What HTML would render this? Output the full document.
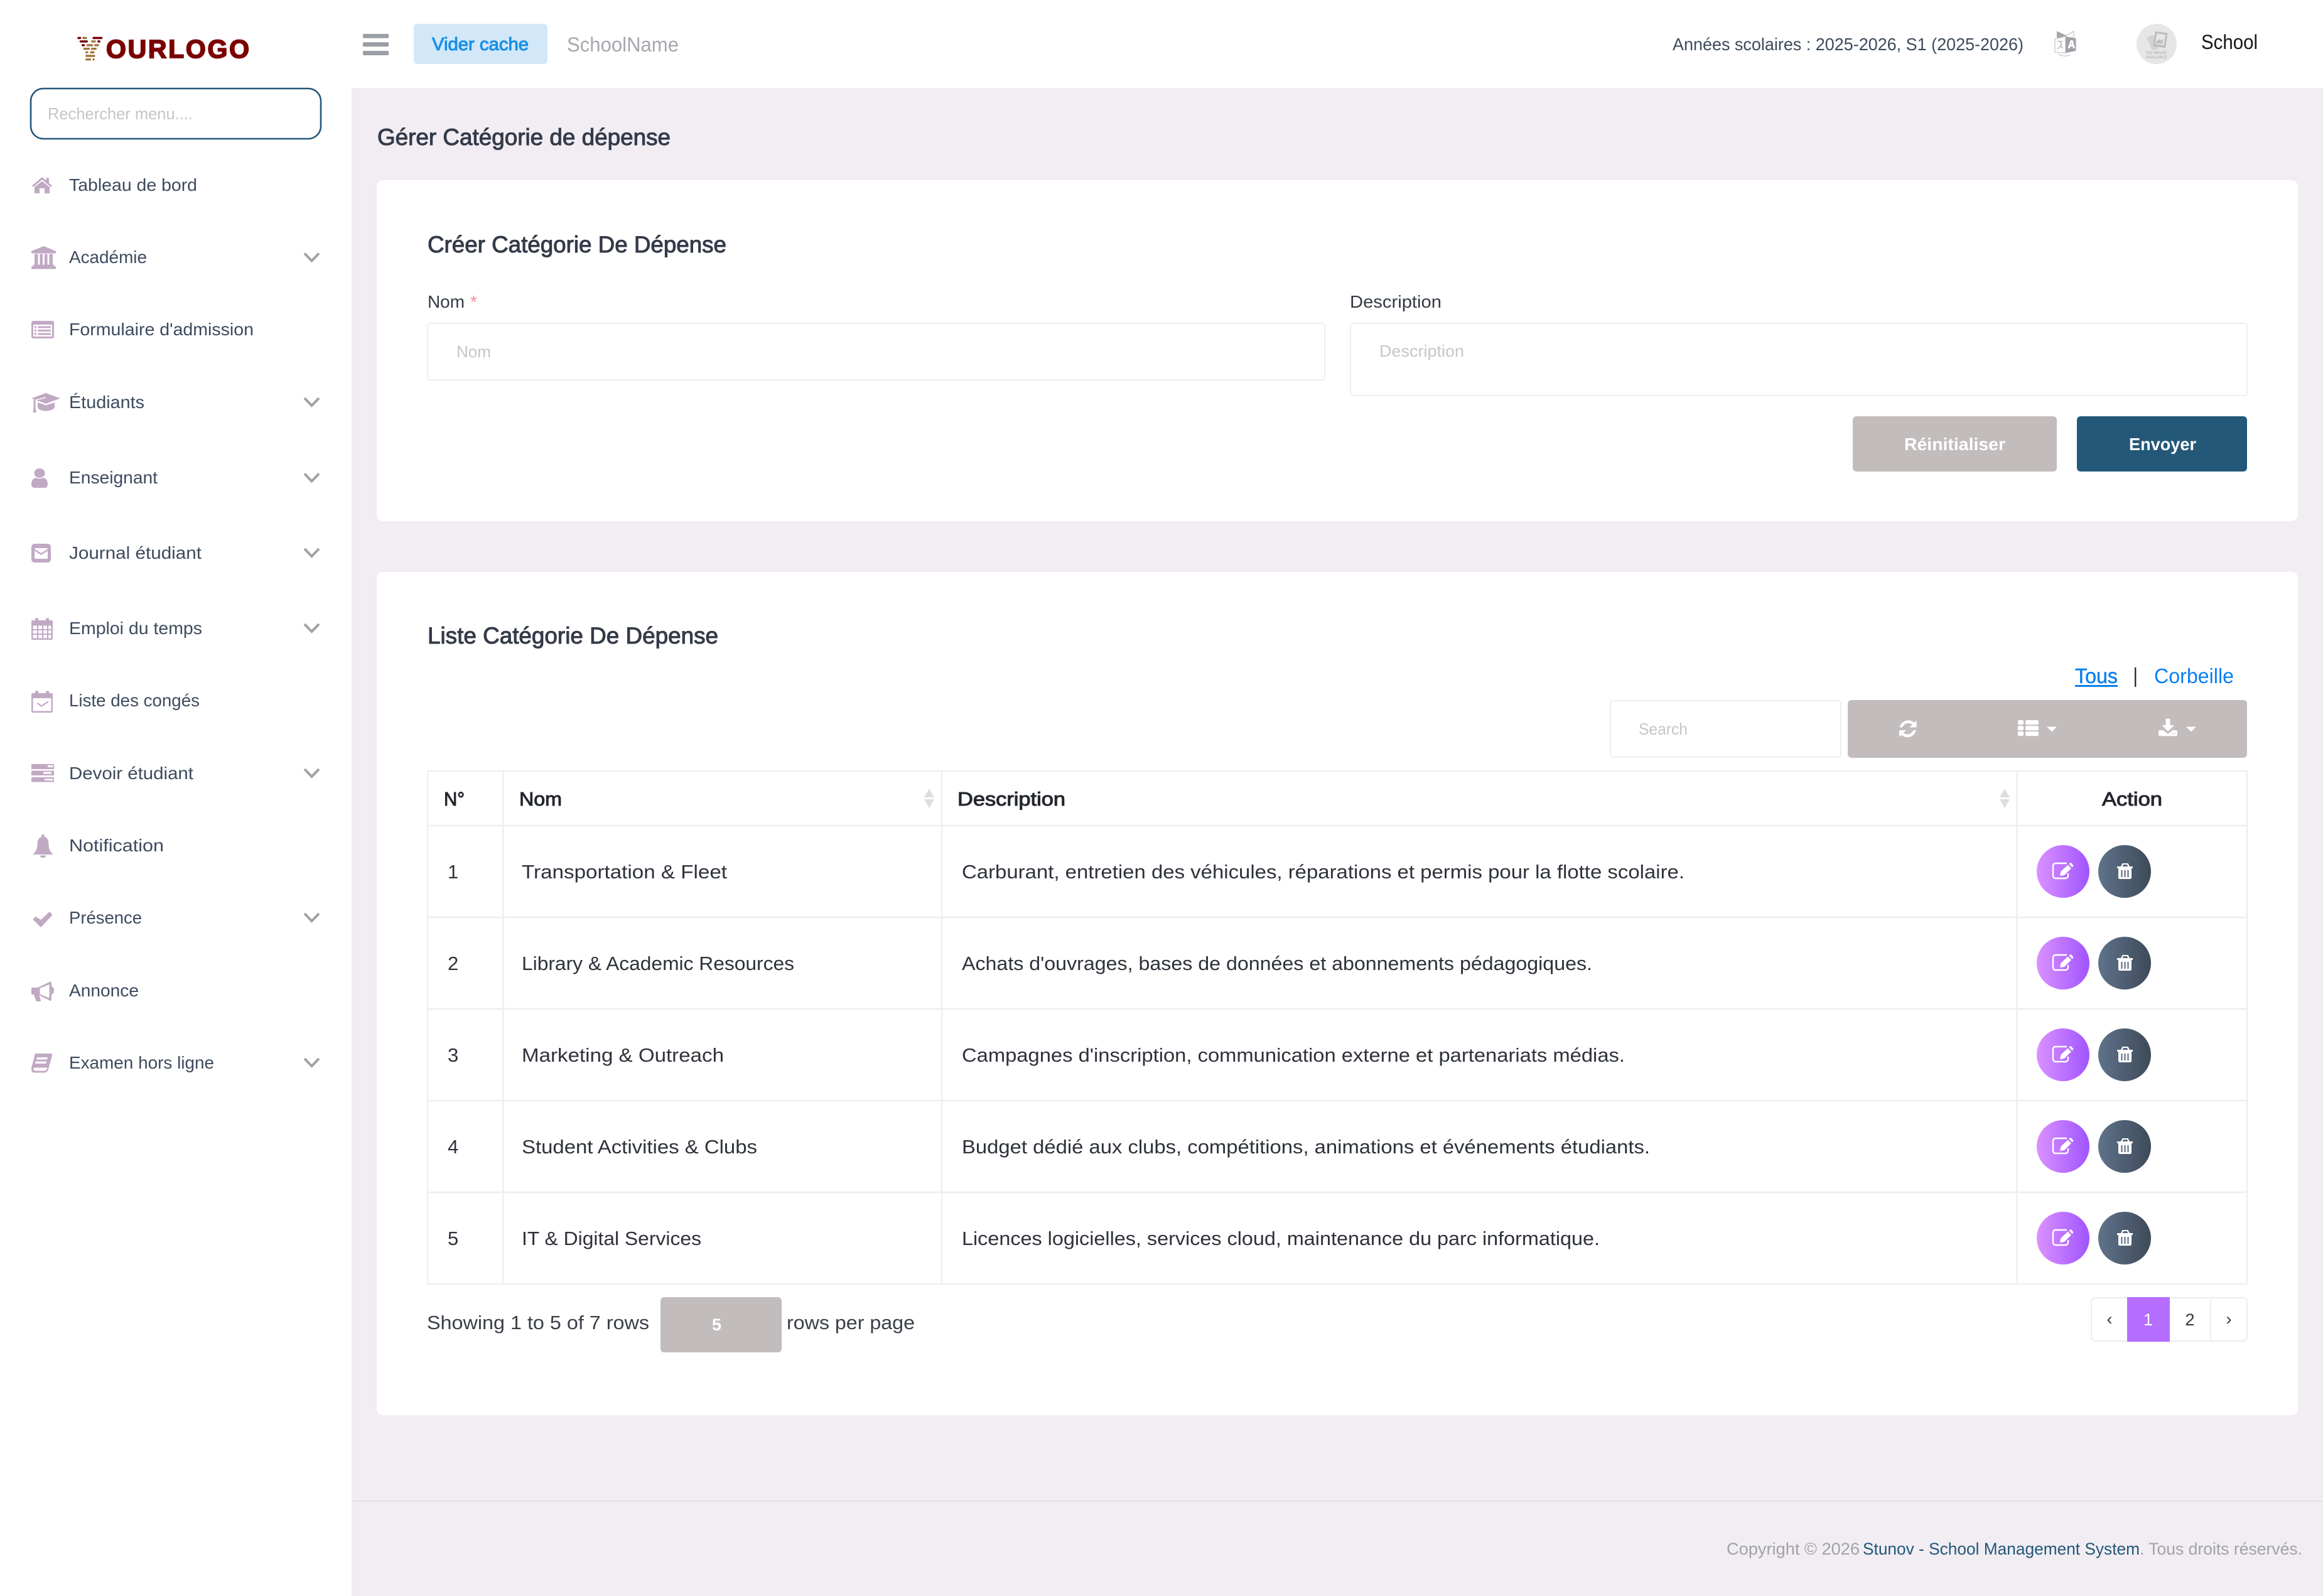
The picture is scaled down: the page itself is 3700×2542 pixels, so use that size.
<!DOCTYPE html>
<html lang="fr">
<head>
<meta charset="utf-8">
<title>Gérer Catégorie de dépense</title>
<style>
html,body{margin:0;padding:0;background:#f1edf3;width:3700px;height:2542px;overflow:hidden}
svg{display:block}
text{font-family:"Liberation Sans",Arial,sans-serif;white-space:pre}
.s{font-size:28px;fill:#3e4b5e}
.t{font-size:37px;fill:#343a48;stroke:#343a48;stroke-width:1px}
.l{font-size:28px;fill:#343a44}
.ph{font-size:26px;fill:#c6c6c9}
.b{font-size:28px;fill:#fff;font-weight:bold}
.h{font-size:31px;fill:#23262d;stroke:#23262d;stroke-width:1px}
.r{font-size:31px;fill:#2e323a}
.sh{font-size:31px;fill:#3a3f49}
.a{font-size:33px;fill:#0a80f0}
.p{font-size:27px;fill:#343740}
.f{font-size:27px}
.ic{fill:#c1a9c4}
.chev{fill:none;stroke:#a2a2a6;stroke-width:4;stroke-linejoin:miter}
.br{fill:#fff;stroke:#eeeef3;stroke-width:2}
.grid{stroke:#eeeef3;stroke-width:2.4;fill:none}
</style>
</head>
<body>
<svg xmlns="http://www.w3.org/2000/svg" width="3700" height="2542" viewBox="0 0 3700 2542">
<defs>
<linearGradient id="ge" x1="0" x2="1" y1="0" y2="0"><stop offset="0" stop-color="#da92ff"/><stop offset="1" stop-color="#a054ff"/></linearGradient>
<linearGradient id="gt" x1="0" x2="1" y1="0" y2="0"><stop offset="0" stop-color="#5f738b"/><stop offset="1" stop-color="#3e4a59"/></linearGradient>
<g id="edit">
<circle cx="0" cy="0" r="42" fill="url(#ge)"/>
<path d="M6 -13H-12a4 4 0 0 0-4 4V7a4 4 0 0 0 4 4H4a4 4 0 0 0 4-4V3" fill="none" stroke="#fff" stroke-width="2.4"/>
<path d="M-5 7L-3.5 0L7.500 -10.500L13 -5L2 6Z" fill="#fff"/>
<path d="M9.500 -12L11 -13.500Q12 -14 13 -13.500L16 -10Q16.500 -9 16 -8L14.500 -6.800Z" fill="#fff"/>
</g>
<g id="trash">
<circle cx="0" cy="0" r="42" fill="url(#gt)"/>
<path d="M-12 -8H-6L-3.500 -13H5.500L8 -8H13V-5H11V9.500Q11 12 8.500 12H-7.500Q-10 12-10 9.500V-5H-12Z" fill="#fff"/>
<path d="M-3.500 -8L-1.800 -11H3.800L5.500 -8Z" fill="#546579"/>
<path d="M-4.500 -2V9M.5 -2V9M5.500 -2V9" stroke="#546579" stroke-width="2"/>
</g>
<g id="sort">
<path d="M0 0L8 14H-8Z" fill="#dedede"/><path d="M-8 17H8L0 31Z" fill="#dedede"/>
</g>
</defs>

<!-- page -->
<rect width="3700" height="2542" fill="#f1edf3"/>
<rect x="0" y="0" width="3700" height="140" fill="#fff"/>
<rect x="0" y="0" width="560" height="2542" fill="#fff"/>

<!-- logo -->
<g fill="#7b0000">
<rect x="123.300" y="58.800" width="6" height="3.400" rx="1.700"/><rect x="147.300" y="58.800" width="16" height="3.400" rx="1.700"/>
<rect x="126.700" y="64.300" width="13.300" height="3.400" rx="1.700"/><rect x="155" y="64.300" width="5" height="3.400" rx="1.700"/>
<rect x="130" y="70.300" width="5.300" height="3.400" rx="1.700"/>
</g>
<g fill="#a5763c">
<rect x="131" y="58.800" width="7.700" height="3.400" rx="1.700"/>
<rect x="145" y="64.300" width="7.700" height="3.400" rx="1.700"/>
<rect x="137.700" y="70.300" width="10.600" height="3.400" rx="1.700"/><rect x="150" y="70.300" width="7.700" height="3.400" rx="1.700"/>
<rect x="132.700" y="76" width="10.600" height="3.400" rx="1.700"/><rect x="145" y="76" width="9" height="3.400" rx="1.700"/>
<rect x="136" y="81.600" width="4.700" height="3.400" rx="1.700"/><rect x="143.300" y="81.600" width="7.400" height="3.400" rx="1.700"/>
<rect x="136" y="87.300" width="15.700" height="3.400" rx="1.700"/>
<rect x="136" y="93" width="9" height="3.400" rx="1.700"/><rect x="147.300" y="93" width="3.400" height="3.400" rx="1.700"/>
</g>
<text x="169" y="92" font-size="41" font-weight="bold" fill="#7b0000" stroke="#7b0000" stroke-width="1.800" textLength="228" lengthAdjust="spacing">OURLOGO</text>

<!-- sidebar search -->
<rect x="49" y="141" width="462" height="80" rx="20" fill="#fff" stroke="#24587b" stroke-width="2.600"/>
<text class="ph" x="76" y="190" textLength="231" lengthAdjust="spacingAndGlyphs">Rechercher menu....</text>

<!-- sidebar labels -->
<text class="s" x="110" y="304" textLength="204" lengthAdjust="spacingAndGlyphs">Tableau de bord</text>
<text class="s" x="110" y="419" textLength="124" lengthAdjust="spacingAndGlyphs">Académie</text>
<text class="s" x="110" y="534" textLength="294" lengthAdjust="spacingAndGlyphs">Formulaire d'admission</text>
<text class="s" x="110" y="650" textLength="120" lengthAdjust="spacingAndGlyphs">Étudiants</text>
<text class="s" x="110" y="770" textLength="141" lengthAdjust="spacingAndGlyphs">Enseignant</text>
<text class="s" x="110" y="890" textLength="211" lengthAdjust="spacingAndGlyphs">Journal étudiant</text>
<text class="s" x="110" y="1010" textLength="212" lengthAdjust="spacingAndGlyphs">Emploi du temps</text>
<text class="s" x="110" y="1125" textLength="208" lengthAdjust="spacingAndGlyphs">Liste des congés</text>
<text class="s" x="110" y="1241" textLength="198" lengthAdjust="spacingAndGlyphs">Devoir étudiant</text>
<text class="s" x="110" y="1356" textLength="151" lengthAdjust="spacingAndGlyphs">Notification</text>
<text class="s" x="110" y="1471" textLength="116" lengthAdjust="spacingAndGlyphs">Présence</text>
<text class="s" x="110" y="1587" textLength="111" lengthAdjust="spacingAndGlyphs">Annonce</text>
<text class="s" x="110" y="1702" textLength="231" lengthAdjust="spacingAndGlyphs">Examen hors ligne</text>

<!-- chevrons -->
<g class="chev">
<path d="M485 403.500L496.500 415.500L508 403.500"/>
<path d="M485 634L496.500 646L508 634"/>
<path d="M485 754.500L496.500 766.500L508 754.500"/>
<path d="M485 874L496.500 886L508 874"/>
<path d="M485 994L496.500 1006L508 994"/>
<path d="M485 1225L496.500 1237L508 1225"/>
<path d="M485 1455L496.500 1467L508 1455"/>
<path d="M485 1686L496.500 1698L508 1686"/>
</g>

<!-- sidebar icons -->
<g class="ic">
<!-- home -->
<path d="M67 282L73.500 287.500V283.500H78V291.300L83 295.800L81 298L67 286L53 298L51 295.800Z"/>
<path d="M55 298L67 288.500L79 298V308H71V300H63V308H55Z"/>
<!-- university -->
<path d="M69.500 392L89 400V403.500H50V400Z"/>
<path d="M55 404.500H60.500V421.500H55ZM63.500 404.500H68V421.500H63.500ZM71 404.500H75.500V421.500H71ZM78.500 404.500H84V421.500H78.500Z"/>
<rect x="53" y="421.500" width="33" height="2.500"/><rect x="50" y="424" width="39" height="4.500" rx="1"/>
<!-- list-alt -->
<path fill-rule="evenodd" d="M53 511H83a3 3 0 0 1 3 3V536a3 3 0 0 1-3 3H53a3 3 0 0 1-3-3V514a3 3 0 0 1 3-3ZM53 517V536H83V517Z"/>
<path d="M55 519.500h3v3h-3zM60.500 519.500H81v3H60.500zM55 525h3v3h-3zM60.500 525H81v3H60.500zM55 530.500h3v3h-3zM60.500 530.500H81v3H60.500z"/>
<!-- graduation -->
<path d="M73 626L96 634.500L73 643L58 637.500L73 634L72 632.500L56 636.800L50 634.500Z"/>
<path d="M53.500 636.500h3V650l1.500 7h-5.500l1-7Z"/>
<path d="M60 641L73 645.500L87 641V648C87 652 80 654.500 73 654.500C66 654.500 60 652 60 648Z"/>
<!-- user -->
<ellipse cx="63" cy="753.500" rx="8.500" ry="7.500"/>
<path d="M50 771C50 764 54 761 57.500 761Q63 764 68.500 761C72 761 76 764 76 771C76 775 74 777 71 777H55C52 777 50 775 50 771Z"/>
<!-- envelope -->
<path fill-rule="evenodd" d="M55 866H76a5 5 0 0 1 5 5V891a5 5 0 0 1-5 5H55a5 5 0 0 1-5-5V871a5 5 0 0 1 5-5ZM57 873a2 2 0 0 0-2 1.500L65.500 881L76 874.500a2 2 0 0 0-2-1.500ZM55 877.300V888a2 2 0 0 0 2 2H74a2 2 0 0 0 2-2V877.300L65.500 884Z"/>
<!-- calendar -->
<path fill-rule="evenodd" d="M52 988H56V984.500H61V988H73V984.500H78V988H82a2 2 0 0 1 2 2V1017a2 2 0 0 1-2 2H52a2 2 0 0 1-2-2V990a2 2 0 0 1 2-2ZM52.500 996.500V1002H59V996.500ZM61 996.500V1002H67V996.500ZM69 996.500V1002H75V996.500ZM77 996.500V1002H81.500V996.500ZM52.500 1004V1009H59V1004ZM61 1004V1009H67V1004ZM69 1004V1009H75V1004ZM77 1004V1009H81.500V1004ZM52.500 1011V1016.500H59V1011ZM61 1011V1016.500H67V1011ZM69 1011V1016.500H75V1011ZM77 1011V1016.500H81.500V1011Z"/>
<!-- calendar check -->
<path fill-rule="evenodd" d="M52 1104H56V1100.500H61V1104H73V1100.500H78V1104H82a2 2 0 0 1 2 2V1133a2 2 0 0 1-2 2H52a2 2 0 0 1-2-2V1106a2 2 0 0 1 2-2ZM52.500 1112V1132.500H81.500V1112Z"/>
<path d="M59.500 1120L66 1124.500L77 1117.500" fill="none" stroke="#c1a9c4" stroke-width="2.200"/>
<!-- tasks -->
<path fill-rule="evenodd" d="M50 1217H86V1225H50ZM76 1219V1222H84.500V1219ZM50 1227.500H86V1235H50ZM69 1229.500V1232.500H82V1229.500ZM50 1238H86V1245.500H50ZM71 1240.500V1243H84.500V1240.500Z"/>
<!-- bell -->
<circle cx="68.500" cy="1331.500" r="2.500"/>
<path d="M52 1361C57 1357 59.500 1352 59.500 1345C59.500 1337 63 1332.500 68.500 1332.500C74 1332.500 77.500 1337 77.500 1345C77.500 1352 80 1357 85 1361Z"/>
<path d="M63.500 1362.500H73.500A5 3.800 0 0 1 63.500 1362.500Z"/>
<!-- check -->
<path d="M52 1464L57 1460L65 1465L79 1452L83.500 1457.500L65 1477Z"/>
<!-- bullhorn -->
<path fill-rule="evenodd" d="M50 1573H60L80 1563.500Q82 1563 82 1566V1571Q86 1572 86 1577.500Q86 1583 82 1584V1592Q82 1594.500 80 1594L60 1584H50ZM63.500 1574V1583.500L78.500 1589.500V1568Z"/>
<path d="M54 1584H62L65 1593Q65.500 1595 63 1595H59Q57.500 1595 57 1593Z"/>
<!-- book -->
<path fill-rule="evenodd" d="M56 1678H81Q84 1678 83 1681L77 1703Q76 1707 72 1708.500H55Q50 1708.500 50 1703Q50 1699 52 1694ZM53.500 1701Q52.500 1705 56 1705.500H71Q74 1705.500 75 1702L75.500 1700.500H55.500ZM59 1684L58 1687.500H75L76 1684ZM57 1690.500L56 1694H73L74 1690.500Z"/>
</g>

<!-- header -->
<g fill="#9a9ea6">
<rect x="578" y="54" width="41" height="6.800" rx="1.500"/>
<rect x="578" y="67.300" width="41" height="7" rx="1.500"/>
<rect x="578" y="81" width="41" height="7" rx="1.500"/>
</g>
<rect x="659" y="38" width="213" height="64" rx="6" fill="#d2e8f9"/>
<text x="688" y="80" font-size="29" fill="#1a8fe6" stroke="#1a8fe6" stroke-width="1" textLength="154" lengthAdjust="spacingAndGlyphs">Vider cache</text>
<text x="903" y="82" font-size="32" fill="#a5a8ad" textLength="178" lengthAdjust="spacingAndGlyphs">SchoolName</text>
<text class="s" x="2664" y="80" textLength="559" lengthAdjust="spacingAndGlyphs">Années scolaires : 2025-2026, S1 (2025-2026)</text>

<!-- translate icon -->
<g>
<path d="M3276 49.500L3290 56V62L3276 60Z" fill="#a3a6ab"/>
<path d="M3273 62L3290 58V84.500L3273 83Z" fill="#fff" stroke="#b5b8bc" stroke-width="1"/>
<path d="M3289.500 57L3303 50V60" fill="none" stroke="#b5b8bc" stroke-width="1"/>
<path d="M3290 58L3306.500 61V81L3290 84.500Z" fill="#a0a3a8"/>
<path d="M3293.500 77L3298 64H3301.500L3305 77H3302L3301.200 74H3298L3297 77ZM3298.700 71H3300.500L3299.700 67.500Z" fill="#fff"/>
<path d="M3277 66H3285M3281 65L3284 70Q3281 76 3277 78M3281 72L3286 77" fill="none" stroke="#9b9ea3" stroke-width="1"/>
<path d="M3279 86Q3288 92 3297 87" fill="none" stroke="#b0b3b7" stroke-width="1"/>
</g>

<!-- avatar -->
<circle cx="3435" cy="70" r="32" fill="#e6e6e6"/>
<path d="M3419 59.500L3431 55.500L3438 78L3428 80Z" fill="#d2d2d2"/>
<rect x="3431" y="51" width="20" height="24" rx="1" fill="#bdbdbd" transform="rotate(8 3440 63)"/>
<rect x="3434" y="54" width="14" height="17" fill="#e7e7e7" transform="rotate(8 3440 63)"/>
<path d="M3434 67L3439 62L3443 65L3446 61L3445 70L3434 69Z" fill="#c0c0c0"/>
<text x="3435" y="86" font-size="6.500" fill="#a9a9a9" text-anchor="middle">NO IMAGE</text>
<text x="3435" y="93" font-size="6.500" fill="#a9a9a9" text-anchor="middle">AVAILABLE</text>
<text x="3506" y="78" font-size="32" fill="#15171b" textLength="90" lengthAdjust="spacingAndGlyphs">School</text>

<!-- page title -->
<text class="t" x="601" y="231" textLength="467" lengthAdjust="spacingAndGlyphs">Gérer Catégorie de dépense</text>

<!-- card 1 -->
<rect x="600" y="287" width="3060" height="543" rx="10" fill="#fff"/>
<text class="t" x="681" y="402" textLength="476" lengthAdjust="spacingAndGlyphs">Créer Catégorie De Dépense</text>
<text class="l" x="681" y="490" textLength="59" lengthAdjust="spacingAndGlyphs">Nom</text>
<text x="749" y="490" font-size="28" fill="#f58a9e">*</text>
<rect class="br" x="681" y="515" width="1429" height="90" rx="4"/>
<text class="ph" x="727" y="569" textLength="55" lengthAdjust="spacingAndGlyphs">Nom</text>
<text class="l" x="2150" y="490" textLength="146" lengthAdjust="spacingAndGlyphs">Description</text>
<rect class="br" x="2151" y="515" width="1428" height="115" rx="4"/>
<text class="ph" x="2197" y="568" textLength="135" lengthAdjust="spacingAndGlyphs">Description</text>
<rect x="2951" y="663" width="325" height="88" rx="6" fill="#c2bcbc"/>
<text class="b" x="3033" y="717" textLength="161" lengthAdjust="spacingAndGlyphs">Réinitialiser</text>
<rect x="3308" y="663" width="271" height="88" rx="6" fill="#235878"/>
<text class="b" x="3391" y="717" textLength="107" lengthAdjust="spacingAndGlyphs">Envoyer</text>

<!-- card 2 -->
<rect x="600" y="911" width="3060" height="1343" rx="10" fill="#fff"/>
<text class="t" x="681" y="1025" textLength="463" lengthAdjust="spacingAndGlyphs">Liste Catégorie De Dépense</text>

<text class="a" x="3305" y="1088" textLength="68" lengthAdjust="spacingAndGlyphs" stroke="#0a80f0" stroke-width=".5">Tous</text>
<rect x="3305" y="1091" width="68" height="3" fill="#0a80f0"/>
<rect x="3400" y="1063" width="2.400" height="31" fill="#2b2f36"/>
<text class="a" x="3431" y="1088" textLength="127" lengthAdjust="spacingAndGlyphs">Corbeille</text>

<rect class="br" x="2565" y="1116" width="367" height="90" rx="4"/>
<text class="ph" x="2610" y="1170" font-size="27" textLength="78" lengthAdjust="spacingAndGlyphs">Search</text>
<rect x="2943" y="1115" width="636" height="92" rx="6" fill="#c2bcbc"/>

<!-- toolbar icons -->
<g fill="#fff">
<path d="M3052.500 1147.500V1158.500H3041.500L3045.800 1154.200C3040 1150 3033 1151.500 3030 1158.500H3025.500C3028.500 1148 3040 1143.500 3049 1151Z"/>
<path d="M3025 1174V1163H3036L3031.700 1167.300C3037.500 1171.500 3044.500 1170 3047.500 1163H3052C3049 1173.500 3037.500 1178 3028.500 1170.500Z"/>
<rect x="3214" y="1147" width="9" height="7.300" rx="2"/><rect x="3226" y="1147" width="21" height="7.300" rx="2"/>
<rect x="3214" y="1156" width="9" height="7.300" rx="2"/><rect x="3226" y="1156" width="21" height="7.300" rx="2"/>
<rect x="3214" y="1165" width="9" height="7.300" rx="2"/><rect x="3226" y="1165" width="21" height="7.300" rx="2"/>
<path d="M3260 1157.500H3276L3268 1165.500Z"/>
<path d="M3449.500 1144.500H3456.500V1155H3463L3453 1165L3443.500 1155H3449.500Z"/>
<path d="M3438 1165Q3438 1163 3440 1163H3445.500L3453 1169L3460.500 1163H3466Q3468 1163 3468 1165V1170Q3468 1172.300 3466 1172.300H3440Q3438 1172.300 3438 1170Z"/>
<path d="M3482 1157.500H3498L3490 1165.500Z"/>
</g>
<circle cx="3460" cy="1168.500" r="1" fill="#c2bcbc"/><circle cx="3464" cy="1168.500" r="1" fill="#c2bcbc"/>

<!-- table -->
<rect x="681" y="1228" width="2898" height="817" fill="#fff"/>
<g class="grid">
<rect x="681" y="1228" width="2898" height="817"/>
<path d="M681 1315H3579M681 1461H3579M681 1607H3579M681 1753H3579M681 1899H3579"/>
<path d="M801.500 1228V2045M1500 1228V2045M3212.500 1228V2045"/>
</g>

<text class="h" x="707" y="1283" textLength="33" lengthAdjust="spacingAndGlyphs">N°</text>
<text class="h" x="827" y="1283" textLength="68" lengthAdjust="spacingAndGlyphs">Nom</text>
<use href="#sort" x="1480" y="1256"/>
<text class="h" x="1525" y="1283" textLength="172" lengthAdjust="spacingAndGlyphs">Description</text>
<use href="#sort" x="3193" y="1256"/>
<text class="h" x="3348" y="1283" textLength="96" lengthAdjust="spacingAndGlyphs">Action</text>

<text class="r" x="713" y="1399">1</text>
<text class="r" x="831" y="1399" textLength="327" lengthAdjust="spacingAndGlyphs">Transportation &amp; Fleet</text>
<text class="r" x="1532" y="1399" textLength="1151" lengthAdjust="spacingAndGlyphs">Carburant, entretien des véhicules, réparations et permis pour la flotte scolaire.</text>
<use href="#edit" x="3286" y="1388"/><use href="#trash" x="3384" y="1388"/>

<text class="r" x="713" y="1545">2</text>
<text class="r" x="831" y="1545" textLength="434" lengthAdjust="spacingAndGlyphs">Library &amp; Academic Resources</text>
<text class="r" x="1532" y="1545" textLength="1004" lengthAdjust="spacingAndGlyphs">Achats d'ouvrages, bases de données et abonnements pédagogiques.</text>
<use href="#edit" x="3286" y="1534"/><use href="#trash" x="3384" y="1534"/>

<text class="r" x="713" y="1691">3</text>
<text class="r" x="831" y="1691" textLength="322" lengthAdjust="spacingAndGlyphs">Marketing &amp; Outreach</text>
<text class="r" x="1532" y="1691" textLength="1056" lengthAdjust="spacingAndGlyphs">Campagnes d'inscription, communication externe et partenariats médias.</text>
<use href="#edit" x="3286" y="1680"/><use href="#trash" x="3384" y="1680"/>

<text class="r" x="713" y="1837">4</text>
<text class="r" x="831" y="1837" textLength="375" lengthAdjust="spacingAndGlyphs">Student Activities &amp; Clubs</text>
<text class="r" x="1532" y="1837" textLength="1096" lengthAdjust="spacingAndGlyphs">Budget dédié aux clubs, compétitions, animations et événements étudiants.</text>
<use href="#edit" x="3286" y="1826"/><use href="#trash" x="3384" y="1826"/>

<text class="r" x="713" y="1983">5</text>
<text class="r" x="831" y="1983" textLength="286" lengthAdjust="spacingAndGlyphs">IT &amp; Digital Services</text>
<text class="r" x="1532" y="1983" textLength="1016" lengthAdjust="spacingAndGlyphs">Licences logicielles, services cloud, maintenance du parc informatique.</text>
<use href="#edit" x="3286" y="1972"/><use href="#trash" x="3384" y="1972"/>

<!-- table footer -->
<text class="sh" x="680" y="2117" textLength="354" lengthAdjust="spacingAndGlyphs">Showing 1 to 5 of 7 rows</text>
<rect x="1052" y="2066" width="193" height="88" rx="6" fill="#c2bcbc"/>
<text x="1134" y="2119" font-size="27" font-weight="bold" fill="#fff" textLength="15" lengthAdjust="spacingAndGlyphs">5</text>
<text class="sh" x="1253" y="2117" textLength="204" lengthAdjust="spacingAndGlyphs">rows per page</text>

<rect x="3331" y="2067" width="248" height="69" rx="7" fill="#fff" stroke="#eeeef3" stroke-width="2.400"/>
<rect x="3388" y="2066" width="68" height="71" fill="#b56eff"/>
<rect x="3520" y="2067" width="2" height="69" fill="#eeeef3"/>
<text class="p" x="3360" y="2110" text-anchor="middle">‹</text>
<text class="p" x="3421.500" y="2111" text-anchor="middle" style="fill:#fff">1</text>
<text class="p" x="3488" y="2111" text-anchor="middle">2</text>
<text class="p" x="3550" y="2110" text-anchor="middle">›</text>

<!-- footer -->
<rect x="560" y="2390" width="3140" height="2" fill="#e5e0ea"/>
<text class="f" x="2750" y="2476" fill="#a0a3a9" textLength="212" lengthAdjust="spacingAndGlyphs">Copyright © 2026</text>
<text class="f" x="2967" y="2476" fill="#235878" textLength="441" lengthAdjust="spacingAndGlyphs">Stunov - School Management System</text>
<text class="f" x="3408" y="2476" fill="#a0a3a9" textLength="259" lengthAdjust="spacingAndGlyphs">. Tous droits réservés.</text>
</svg>
</body>
</html>
